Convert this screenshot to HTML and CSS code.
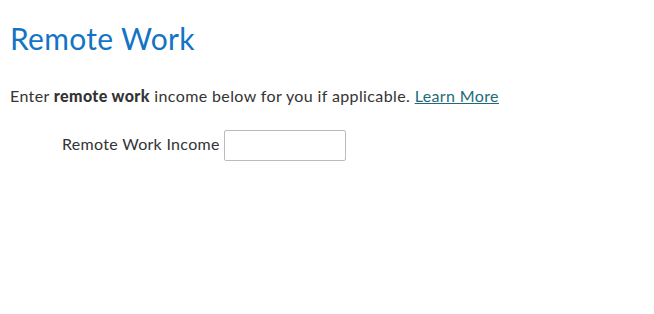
FILE: index.html
```html
<!DOCTYPE html>
<html>
<head>
    <title>Remote Work</title>
    <link rel="stylesheet" href="styles.css">
</head>
<body>
    <h1 class="page-title">Remote Work</h1>
    <p class="intro">Enter <b>remote work</b> income below for you if applicable. <a href="#" class="learn-more">Learn More</a></p>
    <div class="field-row">
        <label for="remoteIncome">Remote Work Income</label>
        <input type="text" id="remoteIncome">
    </div>
</body>
</html>
```

FILE: styles.css
```css
body {
    margin: 0;
    padding: 0 10px;
    font-family: Lato, "Noto Sans", sans-serif;
    color: #333;
    background: #fff;
}
.page-title {
    margin: 0;
    padding-top: 18px;
    font-size: 30px;
    letter-spacing: 0.3px;
    font-weight: normal;
    color: #1473c4;
    line-height: 40px;
}
.intro {
    margin: 28px 0 0 0;
    font-size: 16px;
    letter-spacing: 0.38px;
    line-height: 20px;
}
.intro b {
    font-weight: 900;
}
.learn-more {
    color: #1d6b7a;
    text-decoration: underline;
}
.field-row {
    display: flex;
    align-items: center;
    margin-top: 24px;
    padding-left: 52px;
}
.field-row label {
    font-size: 16px;
    letter-spacing: 0.3px;
    margin-right: 4px;
    margin-bottom: 4px;
}
.field-row input {
    width: 122px;
    height: 31px;
    box-sizing: border-box;
    border: 1px solid #bbb;
    border-radius: 2px;
    padding: 0 4px;
}
```
